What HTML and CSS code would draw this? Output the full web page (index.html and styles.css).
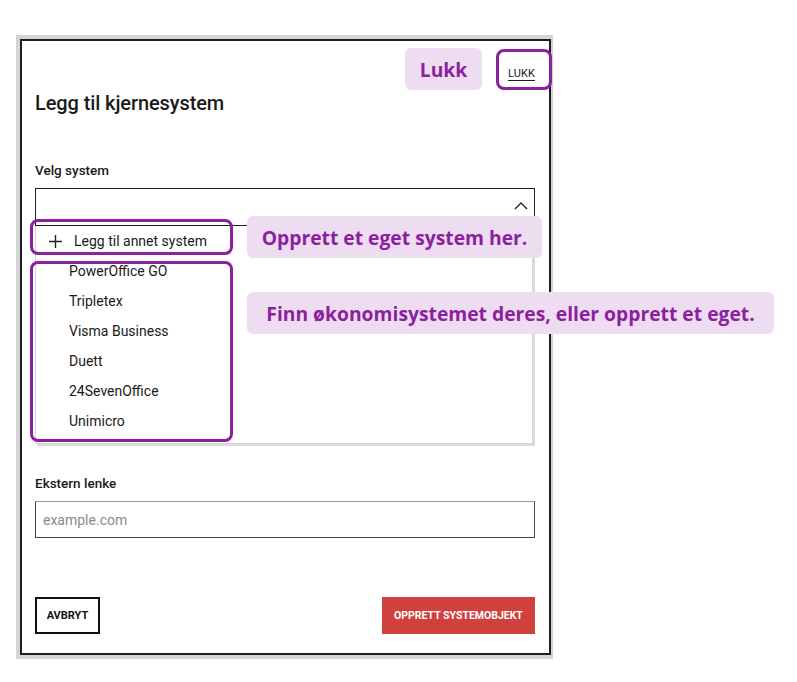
FILE: index.html
```html
<!DOCTYPE html>
<html lang="no">
<head>
<meta charset="utf-8">
<title>Legg til kjernesystem</title>
<link rel="stylesheet" href="styles.css">
</head>
<body>
<div class="stage">
  <div class="modal">
    <div class="inner">
      <div class="close-row"><a class="close-link" href="#">LUKK</a></div>
      <h1 class="title">Legg til kjernesystem</h1>
      <label class="label label-first">Velg system</label>
      <div class="select">
        <svg class="chevron" width="14" height="9" viewBox="0 0 14 9"><polyline points="1,8 7,2 13,8" fill="none" stroke="#222" stroke-width="1.4"/></svg>
      </div>
      <ul class="dropdown">
        <li class="opt opt-add">
          <svg class="plus" width="15" height="15" viewBox="0 0 15 15"><path d="M7.5 1v13M1 7.5h13" stroke="#222" stroke-width="1.4" fill="none"/></svg>
          <span>Legg til annet system</span>
        </li>
        <li class="opt">PowerOffice GO</li>
        <li class="opt">Tripletex</li>
        <li class="opt">Visma Business</li>
        <li class="opt">Duett</li>
        <li class="opt">24SevenOffice</li>
        <li class="opt">Unimicro</li>
      </ul>
      <label class="label label-second">Ekstern lenke</label>
      <div class="input"><span class="placeholder">example.com</span></div>
      <div class="actions">
        <button class="btn-cancel">AVBRYT</button>
        <button class="btn-primary">OPPRETT SYSTEMOBJEKT</button>
      </div>
    </div>
  </div>

  <div class="note note-lukk">Lukk</div>
  <div class="ring ring-lukk"></div>
  <div class="ring ring-add"></div>
  <div class="ring ring-list"></div>
  <div class="note note-add">Opprett et eget system her.</div>
  <div class="note note-list">Finn økonomisystemet deres, eller opprett et eget.</div>
</div>
</body>
</html>
```

FILE: styles.css
```css
* { box-sizing: border-box; }
html, body { margin: 0; padding: 0; background: #fff; }
body { font-family: Roboto, "Liberation Sans", sans-serif; color: #1a1a1a; }
.stage { position: relative; width: 797px; height: 682px; padding: 35px 0 0 16px; }

.modal { width: 537px; border: 4px solid #d4d4d4; border-right-width: 2px; }
.inner { border: 2px solid #1e1e1e; background: #fff; padding: 0 14px 19px 13px; }

.close-row { display: flex; justify-content: flex-end; padding-top: 26px; }
.close-link { font-size: 11px; line-height: 14px; color: #1a1a1a; text-decoration: underline; text-underline-offset: 3px; text-decoration-thickness: 1px; letter-spacing: 0.1px; }

.title { margin: 10px 0 0; font-size: 20px; line-height: 24px; font-weight: 500; letter-spacing: -0.1px; }

.label { display: block; font-size: 13.5px; line-height: 18px; font-weight: 500; }
.label-first { margin-top: 46px; }
.label-second { margin-top: 30px; }

.select { position: relative; margin-top: 9px; height: 38px; border: 1px solid #1e1e1e; }
.chevron { position: absolute; right: 6px; top: 12px; }

.dropdown { list-style: none; margin: 0; padding: 0 0 7px; width: 498px; border: 1px solid #d6d6d6; border-top: none; box-shadow: 2px 2px 0 #dcdcdc; }
.opt { height: 30px; display: flex; align-items: center; padding-left: 33px; font-size: 14px; color: #1a1a1a; }
.opt-add { padding-left: 12px; gap: 11px; }
.plus { display: block; }

.input { margin-top: 9px; height: 37px; border: 1px solid #444; border-top-color: #999; display: flex; align-items: center; padding-left: 7px; }
.placeholder { font-size: 14px; color: #8a8a8a; }

.actions { margin-top: 59px; display: flex; justify-content: space-between; }
.btn-cancel { height: 37px; width: 65px; background: #fff; border: 2px solid #111; font-family: inherit; font-size: 11px; font-weight: 700; color: #111; padding: 0; }
.btn-primary { height: 37px; width: 153px; background: #d0413d; border: none; font-family: inherit; font-size: 10.5px; font-weight: 700; color: #fff; padding: 0; }

.note { position: absolute; background: #eedcf0; color: #8b1fa0; border-radius: 6px; font-family: "Open Sans", sans-serif; font-weight: 700; display: flex; align-items: center; justify-content: center; font-size: 19.3px; }
.note-lukk { left: 405px; top: 48px; width: 77px; height: 42px; }
.note-add { left: 247px; top: 216px; width: 295px; height: 42px; }
.note-list { left: 247px; top: 292px; width: 527px; height: 42px; }

.ring { position: absolute; border: 3px solid #8b1fa0; border-radius: 8px; }
.ring-lukk { left: 496px; top: 49px; width: 56px; height: 41px; }
.ring-add { left: 30px; top: 219px; width: 203px; height: 36px; }
.ring-list { left: 30px; top: 261px; width: 203px; height: 181px; }
```
